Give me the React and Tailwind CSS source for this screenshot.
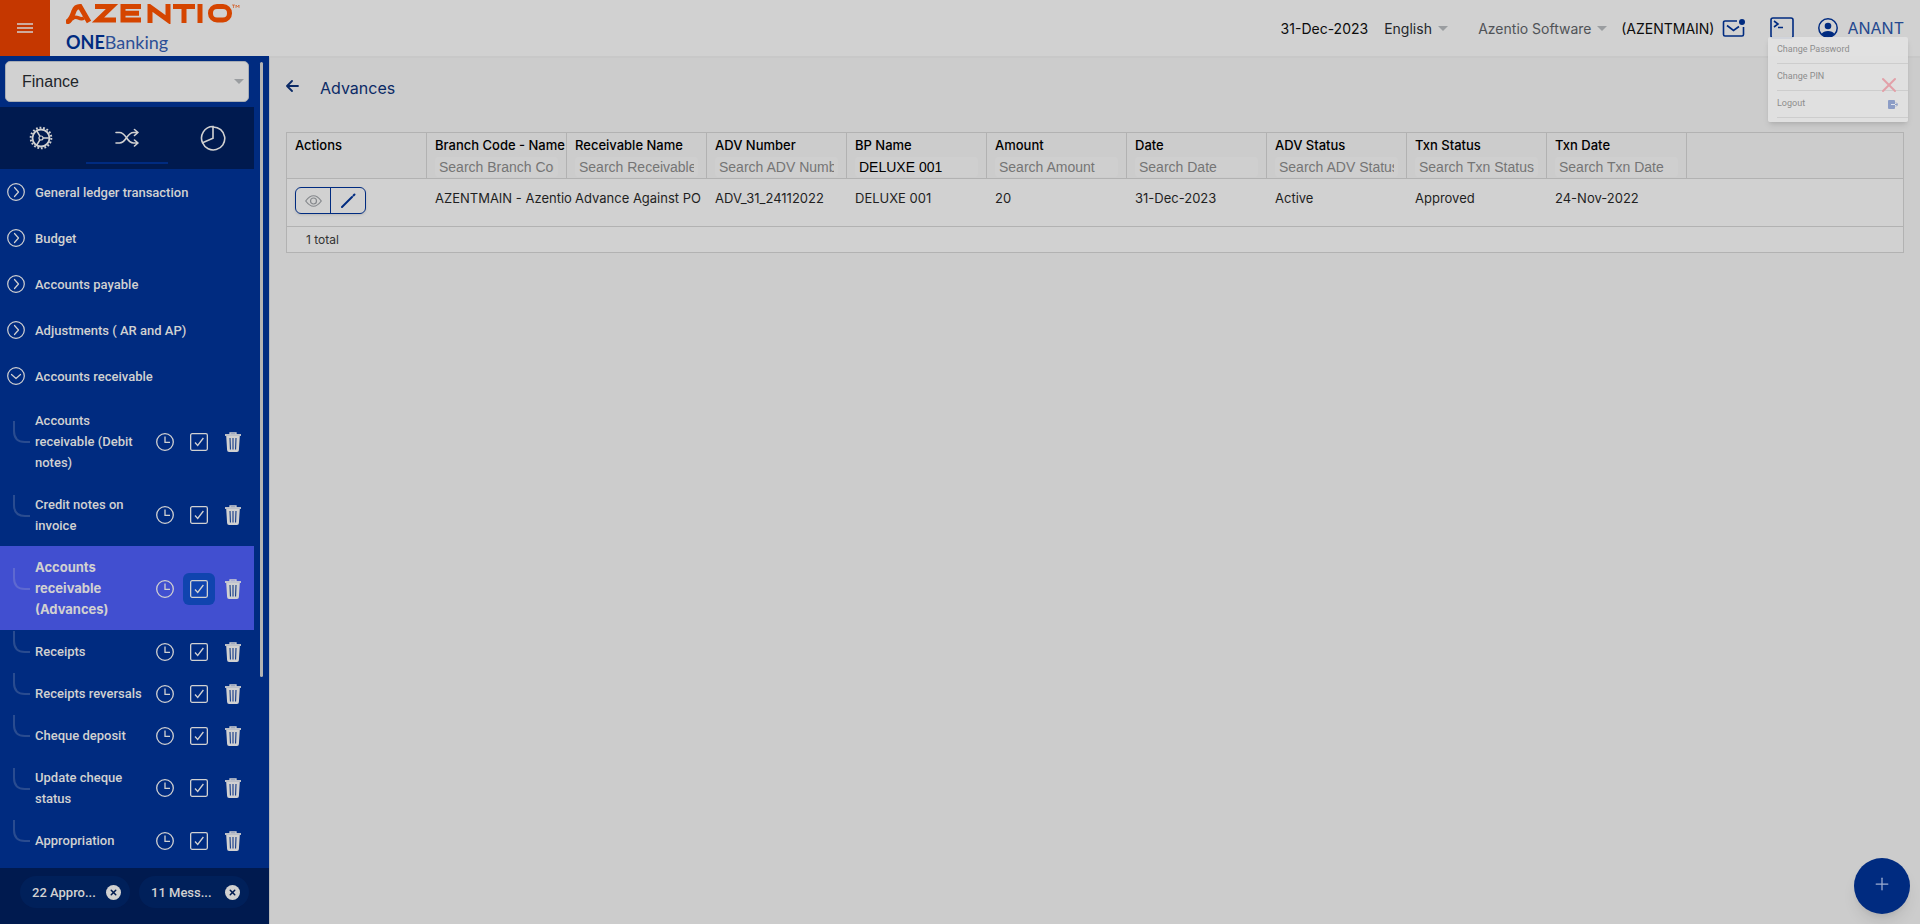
import { Plus, X } from "lucide-react";

const ledgerGroups = ["General ledger transaction", "Budget", "Accounts payable", "Adjustments ( AR and AP)", "Accounts receivable"];

const entries = [
  { name: "Accounts receivable (Debit notes)" },
  { name: "Credit notes on invoice" },
  { name: "Accounts receivable (Advances)", active: true },
  { name: "Receipts" },
  { name: "Receipts reversals" },
  { name: "Cheque deposit" },
  { name: "Update cheque status" },
  { name: "Appropriation" },
];

const columns = [
  { title: "Branch Code - Name", cell: "AZENTMAIN - Azentio" },
  { title: "Receivable Name", cell: "Advance Against PO" },
  { title: "ADV Number", cell: "ADV_31_24112022" },
  { title: "BP Name", cell: "DELUXE 001", filter: "DELUXE 001" },
  { title: "Amount", cell: "20" },
  { title: "Date", cell: "31-Dec-2023" },
  { title: "ADV Status", cell: "Active" },
  { title: "Txn Status", cell: "Approved" },
  { title: "Txn Date", cell: "24-Nov-2022" },
];

const svgProps = { fill: "none", stroke: "currentColor", "aria-hidden": true };

function Logo() {
  return (
    <a href="#home" aria-label="Azentio ONEBanking" className="flex w-[174px] flex-col pt-1">
      <svg width="174" height="20" viewBox="0 0 174 20" fill="none" stroke="#d54500" strokeWidth="5" aria-hidden="true">
        <path d="M0 18.500C5 17 6 12 8 7c1-3 3-4.500 6-4.500L23 18" />
        <path d="M6 15c5-5 7 2 12-1" strokeWidth="3.500" />
        <path d="M29 2.500h17L32 16h18" />
        <path d="M75 2.500H57v13.500h18M59 9.200h14" />
        <path d="M84 19V3l18 13V0" />
        <path d="M107 2.500h22M118 2v17" />
        <path d="M134 0v19" />
        <rect x="144.500" y="2.500" width="19" height="13.500" rx="6.500" />
        <path d="M166 1h3M167.500 1v3M170 4V1l1.500 2L173 1v3" strokeWidth=".6" />
      </svg>
      <span className="mt-[6px] font-['Lato'] text-[18px] leading-6 text-[#2c4f96]">
        <b className="text-[#002b80]">ONE</b>Banking
      </span>
    </a>
  );
}

function GearIcon() {
  return (
    <svg width="24" height="24" viewBox="0 0 24 24" {...svgProps}>
      <circle cx="12" cy="12" r="8.500" strokeWidth="1.800" />
      <circle cx="12" cy="12" r="10.300" strokeWidth="2" strokeDasharray="1.800 1.796" />
      <circle cx="12" cy="12" r="2" strokeWidth="1.200" />
      <path d="M14 12h6.500M11 10.300 7.800 4.800M11 13.700l-3.200 5.500" strokeWidth="1.600" />
    </svg>
  );
}

function ShuffleIcon() {
  return (
    <svg width="24" height="24" viewBox="0 0 24 24" strokeWidth="1.600" strokeLinecap="round" strokeLinejoin="round" {...svgProps}>
      <path d="M1 6.500h3.500c7 0 7 10.500 14 10.500H23M1 17h3.500c7 0 7-10.500 14-10.500H23M19.500 3.500l3.500 3-3.500 3M19.500 14l3.500 3-3.500 3" />
    </svg>
  );
}

function PieIcon() {
  return (
    <svg width="26" height="26" viewBox="0 0 26 26" strokeWidth="1.600" {...svgProps}>
      <path d="M13 1.500v11.800L2.600 17.800A11.500 11.500 0 0 1 13 1.500Z" />
      <path d="M13 2a11.500 11.500 0 1 1-10.400 15.800" />
    </svg>
  );
}

function CircleChevron({ down }) {
  return (
    <svg width="18" height="18" viewBox="0 0 18 18" strokeWidth="1.200" strokeLinecap="round" strokeLinejoin="round" className="shrink-0" {...svgProps}>
      <circle cx="9" cy="9" r="8.300" />
      <path d={down ? "m4.500 7.500 4.500 4 4.500-4" : "m7.500 4.500 4 4.500-4 4.500"} />
    </svg>
  );
}

function ClockIcon() {
  return (
    <svg width="18" height="18" viewBox="0 0 18 18" strokeWidth="1.300" {...svgProps}>
      <circle cx="9" cy="9" r="8.300" />
      <path d="M9 3.500v5.800h5" />
    </svg>
  );
}

function CheckIcon() {
  return (
    <svg width="18" height="18" viewBox="0 0 18 18" strokeWidth="1.300" {...svgProps}>
      <rect x=".65" y=".65" width="16.700" height="16.700" rx="1.500" />
      <path d="m5 9.500 2.700 3 5.700-7.500" />
    </svg>
  );
}

function TrashIcon() {
  return (
    <svg width="16" height="20" viewBox="0 0 16 20" {...svgProps}>
      <path d="M0 3h16" strokeWidth="1.800" />
      <path d="M5 2.500V1h6v1.500" strokeWidth="1.300" />
      <path d="M1.200 4h13.600l-.9 14a2 2 0 0 1-2 2H4.100a2 2 0 0 1-2-2Z" fill="currentColor" stroke="none" />
      <path d="m5 6 .4 11.500M8 6v11.500M11 6l-.4 11.500" stroke="#002b80" strokeWidth="1" />
    </svg>
  );
}

function Caret() {
  return (
    <svg width="10" height="5" viewBox="0 0 10 5" className="pointer-events-none shrink-0 fill-[#9a9da0]" aria-hidden="true">
      <path d="M0 0h10L5 5Z" />
    </svg>
  );
}

function Header() {
  return (
    <header className="flex h-14 shrink-0 items-stretch bg-[#d1d1d1]">
      <button aria-label="Menu" className="flex w-[50px] items-center justify-center bg-[#c53700] text-[#d1d1d1]">
        <svg width="16" height="10" viewBox="0 0 16 10" strokeWidth="1.500" {...svgProps}>
          <path d="M0 1h16M0 5h16M0 9h16" />
        </svg>
      </button>
      <div className="flex flex-1 items-center justify-between pr-4 pl-4">
        <div className="h-14"><Logo /></div>
        <div className="flex items-center text-[14px] text-[#0c0c0c]">
          <span>31-Dec-2023</span>
          <label className="ml-4 flex items-center text-[#24272b]">
            <select aria-label="Language" className="w-[54px] appearance-none"><option>English</option></select>
            <Caret />
          </label>
          <label className="ml-[30px] flex items-center text-[#505357]">
            <select aria-label="Company" className="w-[119px] appearance-none"><option>Azentio Software</option></select>
            <Caret />
          </label>
          <span className="ml-[14px]">(AZENTMAIN)</span>
          <button aria-label="Messages" className="ml-2 text-[#002b80]">
            <svg width="24" height="20" viewBox="0 0 24 20" strokeWidth="1.600" {...svgProps}>
              <path d="M15 3H3a1.500 1.500 0 0 0-1.500 1.500v12A1.500 1.500 0 0 0 3 18h17a1.500 1.500 0 0 0 1.500-1.500V9M5 7.500l6.500 5 5.500-4" />
              <circle cx="20" cy="4" r="3" fill="currentColor" stroke="none" />
            </svg>
          </button>
          <button aria-label="Console" className="ml-6 text-[#002b80]">
            <svg width="24" height="22" viewBox="0 0 24 22" strokeWidth="1.600" {...svgProps}>
              <rect x="1" y="1" width="22" height="20" rx="2" />
              <path d="m4 4 4 3-4 3M8 10.500h5" />
            </svg>
          </button>
          <button className="ml-6 flex items-center gap-[9px] text-[16px] text-[#24488f]">
            <svg width="20" height="20" viewBox="0 0 20 20" className="text-[#002b80]" {...svgProps}>
              <circle cx="10" cy="10" r="9.200" strokeWidth="1.500" />
              <circle cx="10" cy="8" r="3.300" fill="currentColor" stroke="none" />
              <path d="M3.500 16c2-4 11-4 13 0-3 4-10 4-13 0Z" fill="currentColor" stroke="none" />
            </svg>
            ANANT
          </button>
        </div>
      </div>
    </header>
  );
}

function Entry({ name, active }) {
  return (
    <li className={active ? "relative flex items-center bg-[#414fd0] pt-[11px] pb-[10px] pl-[35px] font-['Inter'] font-bold" : "relative flex items-center pt-[11px] pb-[10px] pl-[35px]"}>
      <svg width="17" height="22" viewBox="0 0 17 22" className="absolute top-1/2 left-[13px] -mt-5 opacity-20" {...svgProps}>
        <path d="M1 0v10q0 11 11 11h5" strokeWidth="2" />
      </svg>
      <a href="#entry" className="w-[110px]">{name}</a>
      <div className="ml-1 flex h-5 items-center">
        <button aria-label="History" className="flex w-8 justify-center"><ClockIcon /></button>
        <button aria-label="Approve" className={active ? "ml-[2px] flex size-8 items-center justify-center rounded-md bg-[#1044af]" : "ml-[2px] flex w-8 justify-center"}><CheckIcon /></button>
        <button aria-label="Delete" className="ml-[2px] flex w-8 justify-center"><TrashIcon /></button>
      </div>
    </li>
  );
}

function Sidebar() {
  return (
    <aside className="flex w-[269px] shrink-0 flex-col bg-[#002b80] font-['Roboto'] text-[14px] leading-[21px] font-medium text-[#d1d1d1]">
      <div className="flex min-h-0 flex-1 overflow-hidden">
        <div className="w-[254px]">
          <label className="mx-[5px] mt-[5px] flex h-[41px] items-center rounded-[5px] border border-[#a8adb5] bg-[#d1d1d1] pr-1 pl-4 text-[16px] font-normal text-[#212529]">
            <select aria-label="Module" className="flex-1 appearance-none font-['Liberation_Sans']"><option>Finance</option></select>
            <Caret />
          </label>
          <div className="mt-[5px] flex h-[62px] bg-[#001a4f]">
            <button aria-label="Settings" className="flex flex-1 items-center justify-center"><GearIcon /></button>
            <button aria-label="Transactions" className="mx-[5px] mb-[5px] flex flex-1 items-center justify-center border-b-2 border-[#002b80] pt-[7px]"><ShuffleIcon /></button>
            <button aria-label="Reports" className="flex flex-1 items-center justify-center"><PieIcon /></button>
          </div>
          <nav className="text-[13px]">
            {ledgerGroups.map((g, i) => (
              <button key={g} className="flex h-[46px] w-full items-center gap-[10px] pl-[7px] text-left">
                <CircleChevron down={i === 4} />{g}
              </button>
            ))}
            <ul>{entries.map((e) => <Entry key={e.name} {...e} />)}</ul>
          </nav>
        </div>
        <div className="mt-[6px] ml-[6px] h-[615px] w-[3px] rounded bg-[#b3b3b3]" />
      </div>
      <div className="flex h-14 shrink-0 gap-[9px] bg-[#001a4f] pt-2 pl-5">
        {["22 Appro...", "11 Mess..."].map((t) => (
          <div key={t} className="flex h-8 w-[110px] items-center justify-between rounded-full bg-[#00205a] pr-[9px] pl-3 text-[13px]">
            {t}
            <button aria-label="Close" className="flex size-[15px] items-center justify-center rounded-full bg-[#d1d1d1] text-[#001a4f]"><X size={9} strokeWidth={4} /></button>
          </div>
        ))}
      </div>
    </aside>
  );
}

function AdvancesTable() {
  return (
    <div className="mt-8 border border-[#b2b2b2] bg-[#d1d1d1] text-[13px]">
      <table className="w-full table-fixed border-separate border-spacing-0 text-left">
        <thead>
          <tr className="bg-[#cccccc] align-top text-black">
            <th className="h-[46px] w-[140px] border-r border-b border-[#b2b2b2] px-2 pt-[2px] leading-5 font-medium">Actions</th>
            {columns.map((c) => (
              <th key={c.title} className="w-[140px] border-r border-b border-[#b2b2b2] px-2 pt-[2px] font-medium whitespace-nowrap">
                <div className="leading-5">{c.title}</div>
                <input aria-label={"Search " + c.title} placeholder={"Search " + c.title} defaultValue={c.filter} className="mt-[2px] mb-[1px] block h-5 w-full rounded-[3px] bg-[#cfcfcf] px-1 font-['Liberation_Sans'] text-[14px] font-normal text-black placeholder:text-[#757575]" />
              </th>
            ))}
            <th className="border-b border-[#b2b2b2]" />
          </tr>
        </thead>
        <tbody>
          <tr className="align-top text-[#1f1f1f]">
            <td className="h-12 border-b border-[#b2b2b2] px-2 pt-2">
              <div className="flex h-[27px] w-[71px] rounded-md border border-[#002b80] shadow-sm">
                <button aria-label="View" className="flex flex-1 items-center justify-center border-r border-[#002b80] text-[#85888c]">
                  <svg width="17" height="12" viewBox="0 0 17 12" {...svgProps}><path d="M.7 6q7.800-10.500 15.600 0-7.800 10.500-15.600 0Z" strokeWidth="1.200" /><circle cx="8.500" cy="6" r="3" strokeWidth="1.200" /></svg>
                </button>
                <button aria-label="Edit" className="flex flex-1 items-center justify-center text-[#002b80]">
                  <svg width="15" height="15" viewBox="0 0 15 15" strokeLinecap="round" {...svgProps}><path d="M1 14 11 4" strokeWidth="2" /><path d="m12.500 2.500 1-1" strokeWidth="2" /></svg>
                </button>
              </div>
            </td>
            {columns.map((c) => <td key={c.title} className="border-b border-[#b2b2b2] pt-[9px] pl-2 leading-5 whitespace-nowrap">{c.cell}</td>)}
            <td className="border-b border-[#b2b2b2]" />
          </tr>
        </tbody>
      </table>
      <div className="flex h-[25px] items-center pl-[19px] text-[12px] text-[#333]">1 total</div>
    </div>
  );
}

export default function App() {
  return (
    <div className="flex h-screen flex-col bg-[#cccccc] font-['Inter',sans-serif]">
      <Header />
      <div className="flex min-h-0 flex-1">
        <Sidebar />
        <main className="min-w-0 flex-1 border-t-2 border-l border-t-[#c8c8c8] border-l-[#b8b8b8] px-4 pt-[18px]">
          <div className="flex h-6 items-center gap-[21px] text-[#0b2a66]">
            <button aria-label="Back">
              <svg width="13" height="12" viewBox="0 0 13 12" strokeWidth="1.800" strokeLinecap="round" strokeLinejoin="round" className="mb-1" {...svgProps}>
                <path d="M12 6H1.200M6 1 1 6l5 5" />
              </svg>
            </button>
            <h1 className="text-[16px]">Advances</h1>
          </div>
          <AdvancesTable />
        </main>
      </div>
      <div className="absolute top-[37px] right-3 w-[140px] rounded-[2px] bg-[#e2e2e2]/90 pl-[9px] font-['Roboto'] text-[9px] text-[#8d8d8d] shadow-md">
        {["Change Password", "Change PIN", "Logout"].map((t) => (
          <button key={t} className="flex h-[27px] w-full items-center justify-between border-b border-[#cdcdcd] pr-[10px]">
            {t}
            {t === "Logout" && (
              <svg width="10" height="9" viewBox="0 0 10 9" aria-hidden="true"><path d="M1 0h5a1 1 0 0 1 1 1v7a1 1 0 0 1-1 1H1a1 1 0 0 1-1-1V1a1 1 0 0 1 1-1Z" fill="#8c9dc6" /><path d="M3 4.500h4" stroke="#dfe3ec" fill="none" /><path d="M7 4.500h2.500M8 2.500l2 2-2 2" stroke="#8c9dc6" fill="none" /></svg>
            )}
          </button>
        ))}
        <div className="h-[4px]" />
        <button aria-label="Dismiss" className="absolute top-[36px] right-[7px] text-[#e2a0a8]"><X size={24} strokeWidth={2} /></button>
      </div>
      <button aria-label="Add" className="absolute right-[10px] bottom-[10px] flex size-14 items-center justify-center rounded-full bg-[#002b80] pb-1 text-[#9dadd0] shadow-lg"><Plus size={20} strokeWidth={1.500} /></button>
    </div>
  );
}
